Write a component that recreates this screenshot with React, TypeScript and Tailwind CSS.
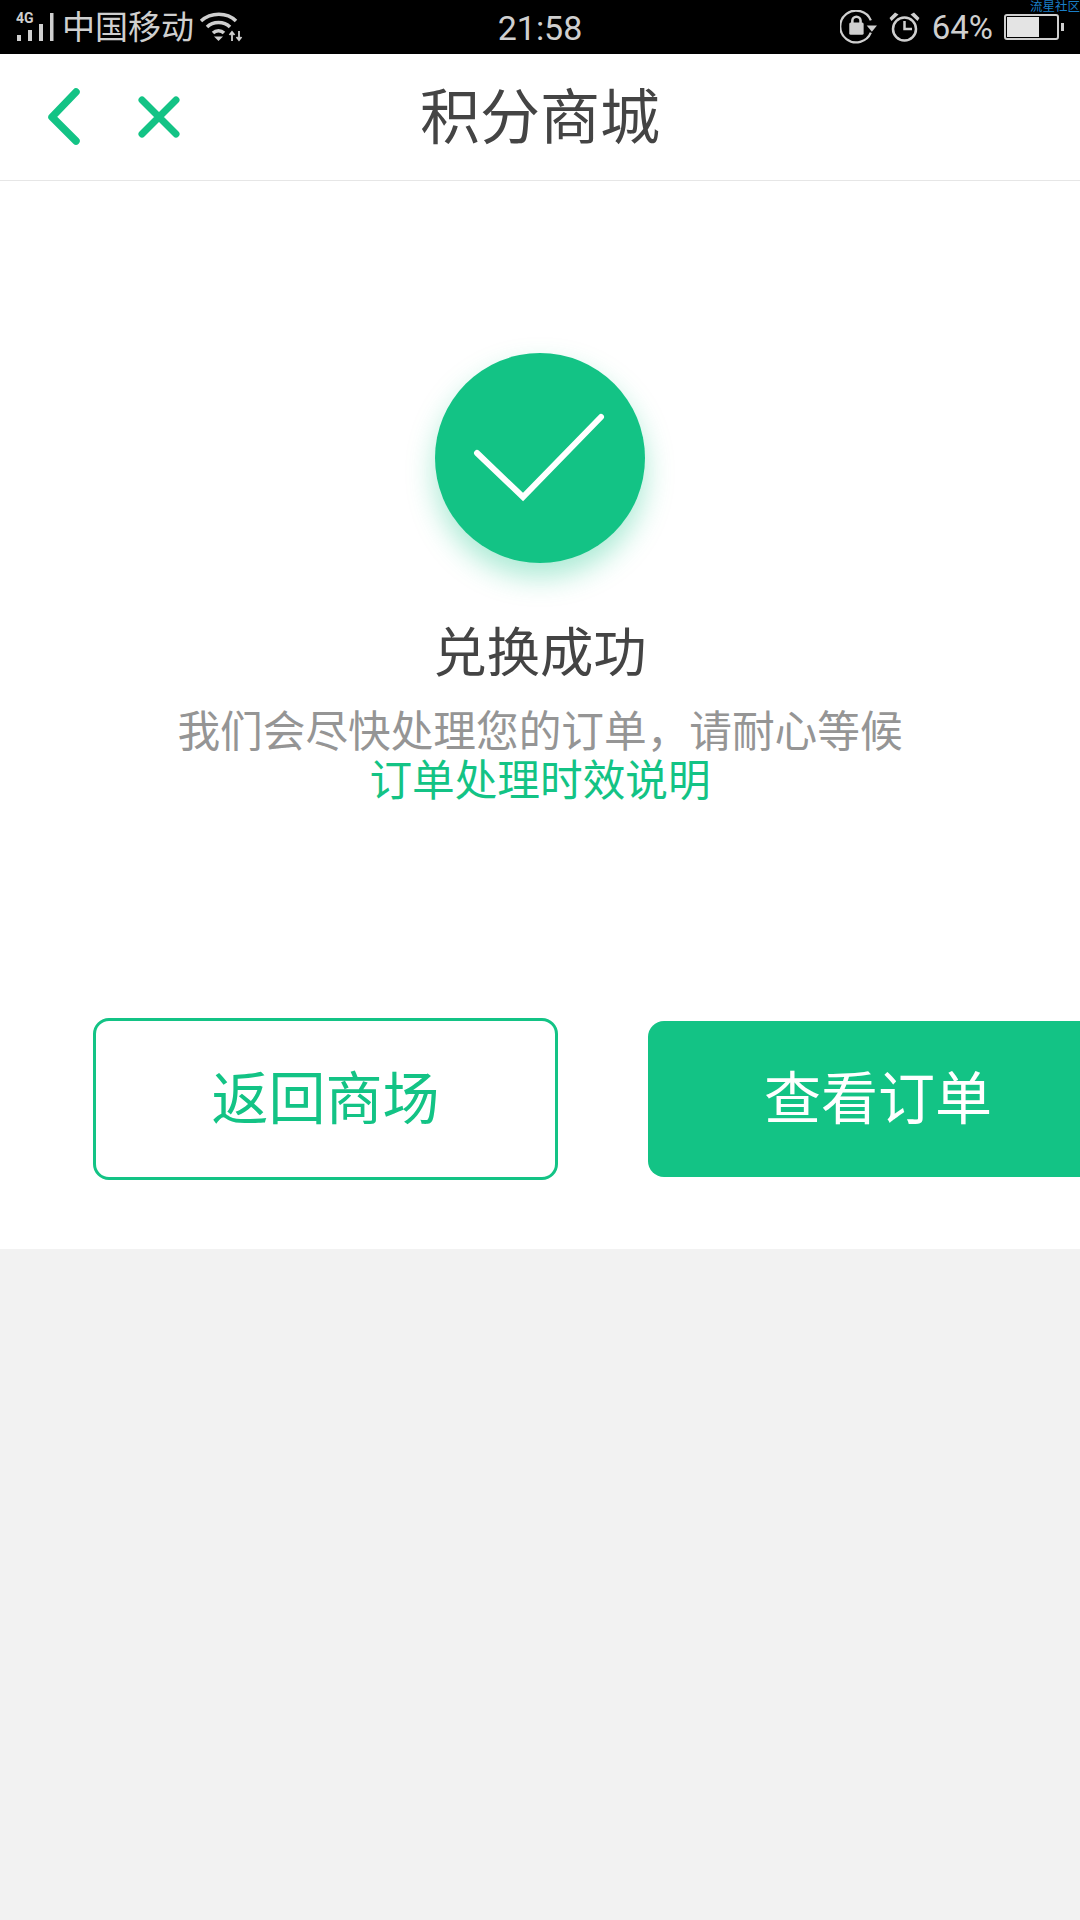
const green = "#13c385";

function StatusBar() {
  return (
    <div className="relative flex h-[54px] items-center justify-between bg-black pl-[16px] pr-[16px] text-[#cfcfcf]">
      <div className="flex flex-1 items-center">
        <svg width="38" height="34" viewBox="0 0 38 34" fill="currentColor">
          <text x="0" y="13" fontSize="14" fontWeight="700" fontFamily="Roboto, sans-serif">4G</text>
          <rect x="1" y="25" width="4" height="6" />
          <rect x="12" y="20" width="4" height="11" />
          <rect x="23" y="14" width="4" height="17" />
          <rect x="34" y="3" width="3.500" height="28" />
        </svg>
        <span className="ml-[8px] pt-[1px] text-[33px] leading-none">中国移动</span>
        <svg className="ml-[5px]" width="44" height="30" viewBox="0 0 44 30" fill="none" stroke="currentColor" strokeWidth="3.500">
          <path d="M2 9C12 0 28 0 37 9" />
          <path d="M8 15C14 9 25 9 31 15" />
          <path d="M14 21C17 18 22 18 25 21" />
          <path d="M19.500 29L15 24.500H24Z" fill="currentColor" stroke="none" />
          <path d="M33 29V20M30.500 23L33 20L35.500 23M40 19V28M37.500 25L40 28L42.500 25" strokeWidth="1.800" />
        </svg>
      </div>
      <span className="pt-[1px] text-[34px] leading-none">21:58</span>
      <div className="flex flex-1 items-center justify-end">
        <svg width="37" height="34" viewBox="0 0 36 33" fill="none" stroke="currentColor" strokeWidth="2.200">
          <path d="M30 22A15.500 15.500 0 1 1 30 10" />
          <path d="M26 15H36L31 21Z" fill="currentColor" stroke="none" />
          <rect x="9" y="12" width="14" height="12" rx="1.500" fill="currentColor" stroke="none" />
          <path d="M12 13V10.500A4 4 0 0 1 20 10.500V13" strokeWidth="2.500" />
        </svg>
        <svg className="ml-[12px]" width="31" height="30" viewBox="0 0 31 30" fill="none" stroke="currentColor" strokeWidth="2.500">
          <circle cx="15.500" cy="17" r="11.500" />
          <path d="M15.500 9V17H23" />
          <path d="M0.500 6L6 0.500L9.500 2.500L2.500 9ZM30.500 6L25 0.500L21.500 2.500L28.500 9Z" fill="currentColor" stroke="none" />
        </svg>
        <span className="ml-[12px] text-[33px] leading-none">64%</span>
        <div className="ml-[11px] flex items-center">
          <div className="flex h-[26px] w-[55px] rounded-[3px] border-2 border-[#cfcfcf] p-px">
            <div className="w-[32px] bg-[#e4e4e4]" />
          </div>
          <div className="ml-[2px] h-[8px] w-[3px] bg-[#cfcfcf]" />
        </div>
      </div>
      <span className="absolute right-0 top-0 text-[12.500px] leading-[14px] text-[#1a7fc8]">流星社区</span>
    </div>
  );
}

function Header() {
  return (
    <div className="relative flex h-[127px] items-center justify-center border-b border-[#e6e6e6] bg-white">
      <div className="absolute left-[46px] top-0 flex h-full items-center">
        <svg width="36" height="62" viewBox="0 0 36 62" fill="none" stroke={green} strokeWidth="7.500" strokeLinecap="round" strokeLinejoin="round">
          <path d="M30 6L6 31L30 55" />
        </svg>
        <svg className="ml-[55px]" width="44" height="44" viewBox="0 0 44 44" fill="none" stroke={green} strokeWidth="7" strokeLinecap="round">
          <path d="M5 5L39 39M39 5L5 39" />
        </svg>
      </div>
      <span className="pt-[3px] text-[60px] leading-none text-[#444444]">积分商城</span>
    </div>
  );
}

export default function App() {
  return (
    <div
      className="flex h-[1920px] w-[1080px] flex-col overflow-hidden bg-[#f2f2f2]"
      style={{ fontFamily: '"Roboto", "Noto Sans CJK SC", sans-serif' }}
    >
      <StatusBar />
      <Header />
      <div className="flex h-[1068px] flex-col bg-white">
        <div className="flex flex-col items-center pt-[172px]">
          <div className="flex h-[210px] w-[210px] items-center justify-center rounded-full bg-[#13c385] shadow-[0_14px_28px_rgba(20,197,135,0.36)]">
            <svg width="134" height="90" viewBox="0 0 134 90" fill="none" stroke="white" strokeWidth="6" strokeLinecap="round">
              <path d="M4 40L50 84L128 4" />
            </svg>
          </div>
          <div className="mt-[65px] text-[53.330px] leading-none text-[#444444]">兑换成功</div>
          <div className="mt-[27px] text-[42.670px] leading-[49px] text-[#959595]">我们会尽快处理您的订单，请耐心等候</div>
          <div className="text-[42.670px] leading-[49px] text-[#13c385]">订单处理时效说明</div>
        </div>
        <div className="mt-[212px] flex items-center pl-[93px]">
          <button className="h-[162px] w-[465px] shrink-0 rounded-[16px] border-[3px] border-[#13c385] text-[57px] text-[#13c385]">返回商场</button>
          <button className="ml-[90px] h-[156px] w-[465px] shrink-0 rounded-[16px] bg-[#13c385] pr-[5px] text-[57px] text-white">查看订单</button>
        </div>
      </div>
    </div>
  );
}
